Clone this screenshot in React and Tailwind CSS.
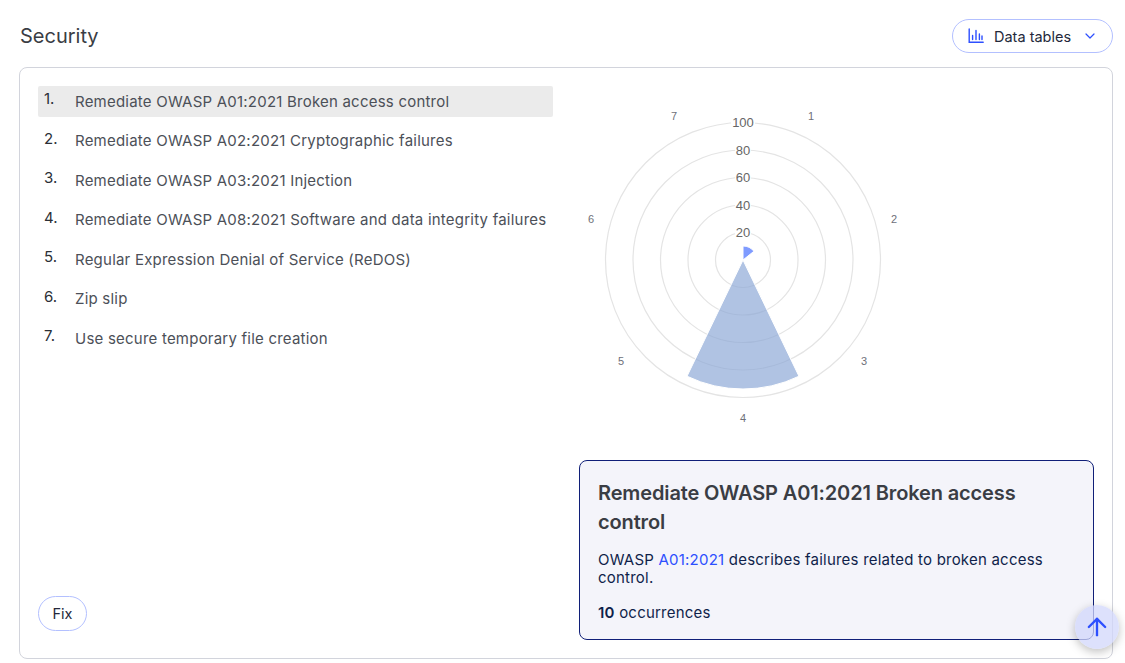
import { ArrowUp, ChevronDown } from 'lucide-react'

const items = [
  'Remediate OWASP A01:2021 Broken access control',
  'Remediate OWASP A02:2021 Cryptographic failures',
  'Remediate OWASP A03:2021 Injection',
  'Remediate OWASP A08:2021 Software and data integrity failures',
  'Regular Expression Denial of Service (ReDOS)',
  'Zip slip',
  'Use secure temporary file creation',
]

const cx = 164
const cy = 174
const rings = [
  { r: 27.5, label: '20' },
  { r: 55, label: '40' },
  { r: 82.5, label: '60' },
  { r: 110, label: '80' },
  { r: 137.5, label: '100' },
]
const spokes = [
  { n: 1, x: 232, y: 30 },
  { n: 2, x: 315, y: 133 },
  { n: 3, x: 285, y: 275 },
  { n: 4, x: 164, y: 332 },
  { n: 5, x: 42, y: 275 },
  { n: 6, x: 12, y: 133 },
  { n: 7, x: 95, y: 30 },
]

function sector(start, end, r) {
  const a = (start * Math.PI) / 180
  const b = (end * Math.PI) / 180
  const x1 = cx + r * Math.sin(a)
  const y1 = cy - r * Math.cos(a)
  const x2 = cx + r * Math.sin(b)
  const y2 = cy - r * Math.cos(b)
  return `M${cx} ${cy}L${x1} ${y1}A${r} ${r} 0 0 1 ${x2} ${y2}Z`
}

function PolarChart() {
  return (
    <svg width="328" height="348" viewBox="0 0 328 348" style={{ fontFamily: '"Liberation Sans", Arial, sans-serif' }}>
      {rings.map((ring) => (
        <circle key={ring.r} cx={cx} cy={cy} r={ring.r} fill="none" stroke="#e4e4e4" strokeWidth="1.2" />
      ))}
      <path d={sector(0, 51.43, 14)} fill="#7f9bff" stroke="#fff" strokeWidth="1" />
      <path d={sector(154.29, 205.71, 129)} fill="#8ba6d6" fillOpacity="0.68" stroke="#fff" strokeWidth="1" />
      {rings.map((ring) => (
        <g key={ring.label}>
          <rect x={cx - (ring.label === '100' ? 12 : 8)} y={cy - ring.r - 6} width={ring.label === '100' ? 24 : 16} height="12" fill="#fff" />
          <text x={cx} y={cy - ring.r + 4.5} textAnchor="middle" fontSize="13" fill="#666">{ring.label}</text>
        </g>
      ))}
      {spokes.map((s) => (
        <text key={s.n} x={s.x} y={s.y + 4} textAnchor="middle" fontSize="11" fill="#6e7079">{s.n}</text>
      ))}
    </svg>
  )
}

export default function App() {
  return (
    <div className="h-[663px] w-[1125px] overflow-hidden bg-white relative" style={{ fontFamily: 'Inter, sans-serif' }}>
      <div className="pl-[19px] pr-3 pt-[19px]">
        <div className="flex items-center justify-between h-[34px]">
          <h2 className="text-[20px] text-[#3a3d44] pl-px">Security</h2>
          <button className="h-[34px] w-[161px] rounded-full border border-[#b3c0ff] flex items-center pl-[15px] text-[14.5px] text-[#23283a]">
            <svg width="16" height="16" viewBox="0 0 16 16" fill="none" stroke="#2d4fff" strokeWidth="1.4" strokeLinecap="round">
              <path d="M1.2 1v13.3h14M4.6 7.5v4M8 2.5v9M11.4 6v5.5M14 8v3.5" />
            </svg>
            <span className="ml-[10px] pt-px">Data tables</span>
            <ChevronDown size={16} strokeWidth={1.8} className="ml-[11px] text-[#2d4fff]" />
          </button>
        </div>
        <div className="mt-[14px] h-[592px] rounded-lg border border-[#d2d4dc] pl-[18px] pr-[18px] pt-[18px] pb-[18px] grid grid-cols-2 gap-[26px]">
          <div className="flex flex-col justify-between pb-[9px]">
            <ol className="flex flex-col gap-[8.5px]">
              {items.map((item, i) => (
                <li key={item} className={`h-[31px] rounded-[2px] flex items-center pl-[6px] pt-px ${i === 0 ? 'bg-[#ebebeb]' : ''}`}>
                  <span className="w-[31px] shrink-0 text-[15px] text-[#2b2f36] -mt-[5px]">{i + 1}.</span>
                  <span className="text-[15px] tracking-[0.22px] text-[#4c5058] whitespace-nowrap">{item}</span>
                </li>
              ))}
            </ol>
            <button className="h-[35px] w-[49px] rounded-full border border-[#b3c0ff] text-[14.5px] text-[#23283a]">Fix</button>
          </div>
          <div className="flex flex-col justify-between">
            <PolarChart />
            <div className="h-[180px] rounded-lg border border-[#101f78] bg-[#f4f4fa] px-[18px] pt-[18px]">
              <h3 className="text-[20px] leading-[29px] font-semibold tracking-[-0.13px] text-[#3a3d44]">Remediate OWASP A01:2021 Broken access control</h3>
              <p className="mt-[14px] text-[15px] tracking-[0.22px] leading-[18px] text-[#0f1f4a]">
                OWASP <a className="text-[#2d4fff]">A01:2021</a> describes failures related to broken access control.
              </p>
              <p className="mt-[17px] text-[15px] tracking-[0.22px] leading-[18px] text-[#0f1f4a]"><span className="font-semibold">10</span> occurrences</p>
            </div>
          </div>
        </div>
      </div>
      <div className="absolute left-[1075px] top-[605px] size-[44px] rounded-full bg-[#d1d7fb]/75 shadow-[0_3px_10px_rgba(0,0,0,0.25)] flex items-center justify-center">
        <ArrowUp size={28} strokeWidth={2} className="text-[#2d4fff]" />
      </div>
    </div>
  )
}
